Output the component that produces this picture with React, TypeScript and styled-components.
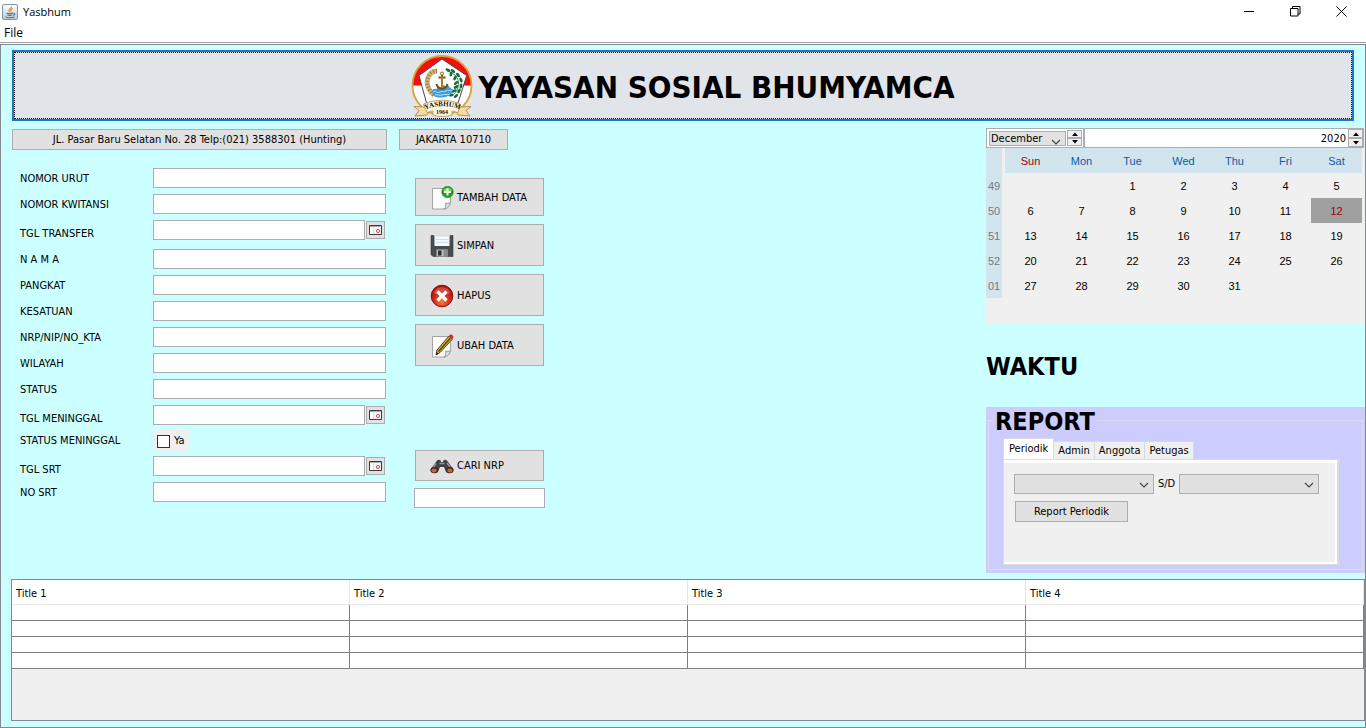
import React from "react";
import styled, { createGlobalStyle, css } from "styled-components";

const ui = `"DejaVu Sans Condensed", "DejaVu Sans", "Open Sans", sans-serif`;

const GlobalStyle = createGlobalStyle`
  *, *::before, *::after { box-sizing: border-box; }
  body { margin: 0; background: #fff; color: #000; font: 11px/14px ${ui}; }
  button, input, select { font: inherit; color: inherit; margin: 0; padding: 0; border-radius: 0; }
  svg { display: block; flex: none; }
`;

const Window = styled.div`
  display: flex;
  flex-direction: column;
  min-height: 100vh;
`;
const TitleBar = styled.header`
  display: flex;
  align-items: center;
  height: 23px;
  padding: 0 2px 0 2px;
  gap: 5px;
  font: 11px/16px "Open Sans", sans-serif;
`;
const WindowControls = styled.div`
  display: flex;
  margin-left: auto;
`;
const WindowButton = styled.button`
  display: grid;
  place-items: center;
  width: 46px;
  height: 21px;
  border: 0;
  background: transparent;
`;
const MenuBar = styled.nav`
  height: 20px;
  padding-left: 4px;
  border-bottom: 1px solid #a0a0a0;
  margin-bottom: 1px;
`;
const MenuItem = styled.button`
  border: 0;
  background: transparent;
  font: 12px/20px "Open Sans", sans-serif;
`;
const Panel = styled.main`
  flex: 1;
  display: flex;
  flex-direction: column;
  border: 1px solid #828790;
  background: #ccffff;
  padding: 5px 0 6px 10px;
`;
const Banner = styled.button`
  display: flex;
  flex: none;
  height: 71px;
  margin: 0 11px 0 1px;
  padding: 0;
  border: 2px solid #1a78c8;
  background: #e1e4e8;
`;
const BannerFocus = styled.span`
  flex: 1;
  align-self: stretch;
  display: flex;
  align-items: center;
  justify-content: center;
  gap: 4px;
  border: 1px dotted #000;
`;
const BannerTitle = styled.span`
  padding-top: 2px;
  font-size: 31px;
  line-height: 36px;
  font-weight: bold;
`;
const Content = styled.div`
  display: flex;
  justify-content: space-between;
  padding-top: 7px;
`;
const Entry = styled.section`
  padding: 1px 0 0 1px;
`;
const Row = styled.div`
  display: flex;
`;
const buttonFace = css`
  border: 1px solid #adadad;
  background: #e1e1e1;
`;
const InfoRow = styled.div`
  display: flex;
  gap: 12px;
`;
const InfoButton = styled.button<{ $width: number }>`
  ${buttonFace}
  width: ${(p) => p.$width}px;
  height: 21px;
`;
const Form = styled.form`
  padding: 18px 0 0 8px;
  width: 374px;
`;
const Field = styled.div<{ $tall?: boolean }>`
  display: flex;
  height: ${(p) => (p.$tall ? 29 : 26)}px;
`;
const CheckField = styled(Field)`
  margin-top: -4px;
`;
const FieldLabel = styled.label<{ $date?: boolean }>`
  width: 133px;
  line-height: ${(p) => (p.$date ? 28 : 22)}px;
`;
const TextBox = styled.input<{ $width?: number }>`
  width: ${(p) => p.$width ?? 233}px;
  height: 20px;
  padding: 0 3px;
  border: 1px solid #abadb3;
  background: #fff;
`;
const DateButton = styled.button`
  ${buttonFace}
  display: grid;
  place-items: center;
  width: 19px;
  height: 18px;
  margin: 1px 0 0 1px;
`;
const CheckLabel = styled.label`
  display: flex;
  align-items: center;
  gap: 4px;
  height: 22px;
  padding: 0 4px;
  background: #f0f0f0;
`;
const CheckBox = styled.input`
  appearance: none;
  width: 13px;
  height: 13px;
  border: 1px solid #333;
  background: #fff;
`;
const Actions = styled.div`
  display: flex;
  flex-direction: column;
  gap: 8px;
  padding: 28px 0 0 28px;
`;
const ActionButton = styled.button<{ $height: number }>`
  ${buttonFace}
  display: flex;
  align-items: center;
  gap: 3px;
  width: 129px;
  height: ${(p) => p.$height}px;
  margin: 0 1px;
  padding: 1px 0 0 14px;
`;
const Search = styled.div`
  display: flex;
  flex-direction: column;
  gap: 7px;
  padding-top: 76px;
`;
const Side = styled.aside`
  width: 379px;
`;
const Calendar = styled.section`
  height: 196px;
  background: #f0f0f0;
  padding-right: 1px;
`;
const CalendarBar = styled.div`
  display: flex;
  height: 20px;
  border: 1px solid #abadb3;
  background: #fff;
`;
const MonthBox = styled.div`
  display: flex;
  gap: 1px;
  padding: 1px 1px 1px 2px;
  border-right: 2px solid #abadb3;
`;
const YearBox = styled.div`
  display: flex;
  flex: 1;
`;
const YearInput = styled.input`
  flex: 1;
  min-width: 0;
  padding: 2px 2px 0 0;
  border: 0;
  background: #fff;
  text-align: right;
`;
const Spinner = styled.span`
  display: flex;
  flex-direction: column;
  width: 15px;
`;
const SpinButton = styled.button`
  ${buttonFace}
  flex: 1;
  min-height: 0;
  display: grid;
  place-items: center;
  background: #f0f0f0;
`;
const SelectWrap = styled.span<{ $width: number }>`
  position: relative;
  display: block;
  width: ${(p) => p.$width}px;
  svg { position: absolute; right: 5px; bottom: 5px; pointer-events: none; }
`;
const SelectBox = styled.select<{ $height: number }>`
  ${buttonFace}
  appearance: none;
  display: block;
  width: 100%;
  height: ${(p) => p.$height}px;
  padding-left: 1px;
  line-height: 12px;
`;
const MonthSelect = styled(SelectWrap)`
  padding-top: 1px;
  svg { bottom: 0; }
`;
const DayTable = styled.table`
  width: 376px;
  border-spacing: 0;
  table-layout: fixed;
  font: 11px/13px "Liberation Sans", sans-serif;
  text-align: center;
  td, th { height: 25px; padding: 2px 0 0; font-weight: normal; }
  thead th { background: #d2e4ee; color: #0a5ca8; }
  thead th:nth-child(2) { color: #a00000; }
  th:first-child { width: 19px; border-right: 3px solid #f0f0f0; background: #d2e4ee; color: #727a80; }
`;
const DayCell = styled.td<{ $today?: boolean }>`
  ${(p) => p.$today && css`background: #a0a0a0; color: #a00000;`}
`;
const Heading = styled.h2`
  margin: 0;
  font-size: 25px;
  line-height: 30px;
`;
const Clock = styled(Heading)`
  padding: 28px 0 25px;
`;
const Report = styled.section`
  height: 166px;
  padding: 0 2px 3px;
  background: #ccccff;
`;
const ReportGroup = styled.fieldset`
  height: 163px;
  min-width: 0;
  margin: 0;
  padding: 4px 23px 0 14px;
  border: 1px solid #dcdcee;
`;
const ReportLegend = styled.legend`
  margin-left: -10px;
  padding: 3px 2px 0;
  font-size: 25px;
  line-height: 24px;
  font-weight: bold;
`;
const Tabs = styled.div`
  display: flex;
  align-items: flex-end;
`;
const Tab = styled.button<{ $active?: boolean }>`
  height: ${(p) => (p.$active ? 21 : 18)}px;
  padding: 0 ${(p) => (p.$active ? 5 : 4)}px;
  border: solid #d9d9d9;
  border-width: 1px 1px 0 ${(p) => (p.$active ? 1 : 0)}px;
  background: ${(p) => (p.$active ? "#fff" : "#f0f0f0")};
  line-height: ${(p) => (p.$active ? 18 : 17)}px;
`;
const TabPage = styled.div`
  height: 106px;
  border: 1px solid #dcdcdc;
  border-width: 1px 2px 1px 1px;
  padding: 3px 2px 2px 0;
  background: #fff;
`;
const TabBody = styled.div`
  height: 100%;
  padding: 11px 0 0 10px;
  background: #f0f0f0;
`;
const Range = styled.div`
  display: flex;
  align-items: center;
  gap: 4px;
`;
const ReportButton = styled.button`
  ${buttonFace}
  width: 113px;
  height: 21px;
  margin: 7px 0 0 1px;
`;
const GridPane = styled.section`
  flex: 1;
  min-height: 142px;
  margin-top: 6px;
  border: 1px solid #828790;
  background: #f0f0f0;
`;
const DataTable = styled.table`
  width: 100%;
  border-spacing: 0;
  table-layout: fixed;
  background: #fff;
  th {
    height: 25px;
    padding: 3px 4px 0;
    border-right: 1px solid #e5e5e5;
    border-bottom: 1px solid #e8e8e8;
    font-weight: normal;
    text-align: left;
  }
  td {
    height: 16px;
    padding: 0;
    border-right: 1px solid #808080;
    border-bottom: 1px solid #808080;
  }
`;

const JavaIcon = () => (
  <svg width="16" height="16" viewBox="0 0 16 16">
    <defs>
      <linearGradient id="jv" x1="0" y1="0" x2="0" y2="1">
        <stop offset="0" stopColor="#fff" /><stop offset="1" stopColor="#b9cad6" />
      </linearGradient>
    </defs>
    <rect x=".5" y=".5" width="15" height="15" rx="1.5" fill="url(#jv)" stroke="#7896aa" />
    <path d="M9.6 2.5C10 4.4 6.5 5 6.9 6.6c.1.8.8 1.2 1 1.8M10.8 4.5C8.6 5.4 8.3 6.2 9 7c.4.6.2 1.1-.3 1.5" fill="none" stroke="#ee8b22" strokeWidth="1.1" />
    <path d="M4.6 9.3c2 .6 4.500.6 6.300 0M5.200 11c1.600.5 3.700.5 5.100 0M3.300 12.900c2.500.9 6.500.9 9.200 0M11.200 9.300c2.200-.4 2.100 1.700 0 2.200" fill="none" stroke="#4b7594" strokeWidth="1.1" />
  </svg>
);

const Logo = () => (
  <svg width="63" height="64" viewBox="0 0 63 64" role="img" aria-label="Yasbhum 1964">
    <circle cx="31" cy="31.500" r="29.500" fill="#fff" />
    <path d="M1.500 31.500a29.500 29.500 0 0 1 59 0z" fill="#f80d0d" />
    <circle cx="31" cy="31.500" r="29.500" fill="none" stroke="#d9a23a" strokeWidth="1.800" />
    <path d="M31 5 55.700 21.500 47 49H15.500L8 21.500z" fill="#fff" stroke="#49474d" strokeWidth="1" />
    <path d="M26 17C17 17 14 28 18 35c1.500 3 3 4.500 5 6" fill="none" stroke="#d3b47c" strokeWidth="5" />
    <path d="M26 17C17 17 14 28 18 35c1.500 3 3 4.500 5 6" fill="none" stroke="#9a7a44" strokeWidth="4" strokeDasharray="1 2" />
    <path d="M36 17c9 2 13 9 11 16-1 4-3 7-6 9" fill="none" stroke="#3a8a52" strokeWidth="1" />
    <g fill="#156b38">
      {[[37, 16, 20], [40, 20, 100], [42, 17, 40], [44, 24, 120], [47, 21, 50], [45, 29, 140], [50, 26, 70], [45, 33, 150], [50, 32, 100], [43, 37, 160], [48, 37, 120], [40, 41, 170], [45, 42, 140]].map(([x, y, a]) => (
        <ellipse key={`${x}-${y}`} cx={x} cy={y} rx="2.600" ry="1.400" transform={`rotate(${a} ${x} ${y})`} />
      ))}
    </g>
    <path d="M21 37c2-4 4 0 5-3s3 1 5-2 3 2 5 0 2 3 6 3c-1 2 0 3-2 5-3 4-15 5-18 1z" fill="#3b9be0" />
    <path d="M22 38c3-2 4 2 7 0s4 1 6-1 4 1 6-1M24 41c3-1 4 1 7 0s5 0 8-1" fill="none" stroke="#b7e0fa" strokeWidth="1" />
    <circle cx="31" cy="19.500" r="1.500" fill="none" stroke="#8a5c12" strokeWidth="1" />
    <path d="M31 21v14M27.500 23.500h7M25.500 30c.5 3 3 4.500 5.500 5 2.500-.5 5-2 5.500-5" fill="none" stroke="#7a4d0c" strokeWidth="2" />
    <path d="M31 22v12" stroke="#e0ad3c" strokeWidth="1" />
    <path d="M14 53 3 52.500l5 4-4 5.500 12-1 2-4M49 53l11-.5-5 4 4 5.500-12-1-2-4" fill="#f5dda0" stroke="#a87a3c" strokeWidth=".800" />
    <path d="M12.500 50c12-5 25-5 37 0l-2.500 8.500c-2 0-4-1.500-6-1.500v4c-5 2-14 2-19 0v-4c-3 0-4 1.500-6 1.500z" fill="#fff6dc" stroke="#b98a48" strokeWidth=".800" />
    <path id="ribbon" d="M14.500 55.500c11-4.500 23-4.500 34 0" fill="none" />
    <text fontFamily="Liberation Serif, serif" fontWeight="bold" fontSize="7" fill="#111">
      <textPath href="#ribbon" startOffset="50%" textAnchor="middle">YASBHUM</textPath>
    </text>
    <text x="31" y="60" textAnchor="middle" fontFamily="Liberation Serif, serif" fontWeight="bold" fontSize="6" fill="#111">1964</text>
  </svg>
);

const Page = () => (
  <>
    <path d="M2.500 2.500h18v14l-5.500 6.500H2.500z" fill="#fcfcfc" stroke="#9c9c9c" strokeWidth=".900" />
    <path d="M20.500 16.500c-2 1.500-4 .5-5 .5.500 2 .5 4-1.500 6 3 0 6-3 6.500-6.500z" fill="#ddd" stroke="#8c8c8c" strokeWidth=".800" />
  </>
);
const AddIcon = () => (
  <svg width="24" height="24" viewBox="0 0 24 24">
    <Page />
    <circle cx="17.500" cy="6" r="5.800" fill="#1fa01f" stroke="#0d7d12" strokeWidth=".500" />
    <path d="M13 4.500a5 5 0 0 1 9 0c-3 1.500-6 1.500-9 0z" fill="#78d46c" />
    <path d="M17.500 2.500v7M14 6h7" stroke="#fff" strokeWidth="2" />
  </svg>
);
const SaveIcon = () => (
  <svg width="24" height="24" viewBox="0 0 24 24">
    <path d="M1 1.500h22v21H3L1 20.500z" fill="#4a4b4f" stroke="#37383c" strokeWidth=".600" />
    <path d="M4.500 1h15v11h-15z" fill="#f5f9fd" />
    <path d="M4.500 1h15v1.500h-15zM4.500 5h15v1h-15zM4.500 8h15v1h-15z" fill="#cfe0f0" />
    <path d="M6.500 15.500h11v7h-11z" fill="#bcbdc0" />
    <path d="M8 16.500h3.500v5H8z" fill="#2e2f33" />
    <path d="M13.500 15.500h4v7h-4z" fill="#8b8c90" />
  </svg>
);
const DeleteIcon = () => (
  <svg width="24" height="24" viewBox="0 0 24 24">
    <defs>
      <radialGradient id="dl" cx=".5" cy=".75" r=".65">
        <stop offset="0" stopColor="#f0803c" /><stop offset=".6" stopColor="#cf2a18" /><stop offset="1" stopColor="#a80d10" />
      </radialGradient>
    </defs>
    <circle cx="12" cy="12" r="10.800" fill="url(#dl)" stroke="#8e1113" />
    <path d="M3.500 9a9 9 0 0 1 17 0c-5 3-12 3-17 0z" fill="#e66a5a" opacity=".6" />
    <path d="m7.500 7.500 9 9M16.500 7.500l-9 9" stroke="#fff" strokeWidth="3.200" />
  </svg>
);
const EditIcon = () => (
  <svg width="24" height="24" viewBox="0 0 24 24">
    <Page />
    <path d="m6 21 1-5L19 2l3.500 3L10 18.500z" fill="#e4b53a" stroke="#4b3a10" strokeWidth="1" />
    <path d="M8.500 17.500 20.500 4" stroke="#5a4712" strokeWidth="1.600" />
    <path d="m18.500 2.500 1.500-1.700c1.500-.8 4 1 3.200 2.700L22 5z" fill="#c9302a" />
    <path d="m6 21 .7-3 1.900 1.600z" fill="#222" />
  </svg>
);
const BinocularsIcon = () => (
  <svg width="24" height="24" viewBox="0 0 24 24">
    <path d="M7 6.500c2-1.500 4-.5 4 1.500h2c0-2 2-3 4-1.500l6.500 9c.5 4-5 5-7.500 2.500L14 13h-4l-2 5C5.500 20.500 0 19.500.5 15.500z" fill="#424246" />
    <path d="M6 9.500 3.500 13M17 9l3 4M9.500 9.500h5" stroke="#96969a" strokeWidth="1.500" />
    <ellipse cx="4.300" cy="16" rx="3.800" ry="3" fill="#3b2a22" />
    <ellipse cx="19.700" cy="16" rx="3.800" ry="3" fill="#3b2a22" />
    <ellipse cx="4" cy="16.500" rx="2.600" ry="2" fill="#d2622a" />
    <ellipse cx="19.900" cy="16.500" rx="2.600" ry="2" fill="#d2622a" />
  </svg>
);
const DateIcon = () => (
  <svg width="14" height="12" viewBox="0 0 14 12">
    <path d="M.5 1.500h12v9H.5z" fill="#f4f4f4" stroke="#333a44" />
    <path d="M1 2h11v1H1z" fill="#9db4cc" />
    <path d="M1 2h4v1H1z" fill="#c8a878" />
    <path d="M1 3.500h3v6.500H1z" fill="#fff" />
    <path d="M4.500 3.500v6.500" stroke="#ddd" />
    <circle cx="9" cy="7" r="1.600" fill="none" stroke="#e04848" />
  </svg>
);
const Chevron = () => (
  <svg width="10" height="7" viewBox="0 0 10 7"><path d="m1 1 4 4 4-4" fill="none" stroke="#444" strokeWidth="1.200" /></svg>
);
const Arrow = ({ down }: { down?: boolean }) => (
  <svg width="6" height="4" viewBox="0 0 6 4"><path d={down ? "M0 0h6L3 3.500z" : "M0 4h6L3 .500z"} /></svg>
);
const Spin = ({ name }: { name: string }) => (
  <Spinner>
    <SpinButton type="button" aria-label={`Next ${name}`}><Arrow /></SpinButton>
    <SpinButton type="button" aria-label={`Previous ${name}`}><Arrow down /></SpinButton>
  </Spinner>
);

type FieldKind = "text" | "date" | "check";
const fields: { label: string; kind: FieldKind; tall?: boolean }[] = [
  { label: "NOMOR URUT", kind: "text" },
  { label: "NOMOR KWITANSI", kind: "text" },
  { label: "TGL TRANSFER", kind: "date", tall: true },
  { label: "N A M A", kind: "text" },
  { label: "PANGKAT", kind: "text" },
  { label: "KESATUAN", kind: "text" },
  { label: "NRP/NIP/NO_KTA", kind: "text" },
  { label: "WILAYAH", kind: "text" },
  { label: "STATUS", kind: "text" },
  { label: "TGL MENINGGAL", kind: "date", tall: true },
  { label: "STATUS MENINGGAL", kind: "check" },
  { label: "TGL SRT", kind: "date" },
  { label: "NO SRT", kind: "text" },
];

const FormField = ({ label, kind, tall, id }: { label: string; kind: FieldKind; tall?: boolean; id: string }) => {
  if (kind === "check")
    return (
      <CheckField>
        <FieldLabel htmlFor={id}>{label}</FieldLabel>
        <CheckLabel><CheckBox type="checkbox" id={id} />Ya</CheckLabel>
      </CheckField>
    );
  const date = kind === "date";
  return (
    <Field $tall={tall}>
      <FieldLabel htmlFor={id} $date={date}>{label}</FieldLabel>
      <TextBox id={id} $width={date ? 212 : 233} />
      {date && <DateButton type="button" aria-label={`Pilih ${label}`}><DateIcon /></DateButton>}
    </Field>
  );
};

const actions = [
  { label: "TAMBAH DATA", height: 38, Icon: AddIcon },
  { label: "SIMPAN", height: 42, Icon: SaveIcon },
  { label: "HAPUS", height: 42, Icon: DeleteIcon },
  { label: "UBAH DATA", height: 42, Icon: EditIcon },
];
const days = ["Sun", "Mon", "Tue", "Wed", "Thu", "Fri", "Sat"];
const weeks = ["49", "50", "51", "52", "01"];
const titles = ["Title 1", "Title 2", "Title 3", "Title 4"];

export default function App() {
  return (
    <Window>
      <GlobalStyle />
      <TitleBar>
        <JavaIcon />
        <span>Yasbhum</span>
        <WindowControls>
          <WindowButton aria-label="Minimize"><svg width="10" height="11"><path d="M0 5.500h10" stroke="#000" /></svg></WindowButton>
          <WindowButton aria-label="Restore"><svg width="11" height="11"><path d="M.5 2.500h7.500v7.500H.5zM2.500 2.500V.5h7.500v7.500H8" fill="none" stroke="#000" /></svg></WindowButton>
          <WindowButton aria-label="Close"><svg width="11" height="11"><path d="m.5.5 10 10m0-10-10 10" stroke="#000" /></svg></WindowButton>
        </WindowControls>
      </TitleBar>
      <MenuBar><MenuItem>File</MenuItem></MenuBar>
      <Panel>
        <Banner>
          <BannerFocus><Logo /><BannerTitle>YAYASAN SOSIAL BHUMYAMCA</BannerTitle></BannerFocus>
        </Banner>
        <Content>
          <Entry>
            <InfoRow>
              <InfoButton $width={375}>JL. Pasar Baru Selatan No. 28 Telp:(021) 3588301 (Hunting)</InfoButton>
              <InfoButton $width={109}>JAKARTA 10710</InfoButton>
            </InfoRow>
            <Row>
              <Form>
                {fields.map((f, i) => <FormField key={f.label} id={`f${i}`} {...f} />)}
              </Form>
              <Actions>
                {actions.map(({ label, height, Icon }) => (
                  <ActionButton key={label} type="button" $height={height}><Icon />{label}</ActionButton>
                ))}
                <Search>
                  <ActionButton type="button" $height={31}><BinocularsIcon />CARI NRP</ActionButton>
                  <TextBox aria-label="NRP" $width={131} />
                </Search>
              </Actions>
            </Row>
          </Entry>
          <Side>
            <Calendar>
              <CalendarBar>
                <MonthBox>
                  <MonthSelect $width={77}>
                    <SelectBox $height={15} aria-label="Bulan"><option>December</option></SelectBox>
                    <Chevron />
                  </MonthSelect>
                  <Spin name="month" />
                </MonthBox>
                <YearBox>
                  <YearInput aria-label="Tahun" defaultValue="2020" />
                  <Spin name="year" />
                </YearBox>
              </CalendarBar>
              <DayTable>
                <thead>
                  <tr><th />{days.map((d) => <th key={d} scope="col">{d}</th>)}</tr>
                </thead>
                <tbody>
                  {weeks.map((week, w) => (
                    <tr key={week}>
                      <th scope="row">{week}</th>
                      {days.map((d, i) => {
                        const date = w * 7 + i - 1;
                        return <DayCell key={d} $today={date === 12}>{date > 0 && date < 32 ? date : ""}</DayCell>;
                      })}
                    </tr>
                  ))}
                </tbody>
              </DayTable>
            </Calendar>
            <Clock>WAKTU</Clock>
            <Report>
              <ReportGroup>
                <ReportLegend>REPORT</ReportLegend>
                <Tabs role="tablist">
                  {["Periodik", "Admin", "Anggota", "Petugas"].map((t, i) => (
                    <Tab key={t} type="button" role="tab" aria-selected={i === 0} $active={i === 0}>{t}</Tab>
                  ))}
                </Tabs>
                <TabPage role="tabpanel">
                  <TabBody>
                    <Range>
                      <SelectWrap $width={140}><SelectBox $height={20} aria-label="Dari" /><Chevron /></SelectWrap>
                      S/D
                      <SelectWrap $width={140}><SelectBox $height={20} aria-label="Sampai" /><Chevron /></SelectWrap>
                    </Range>
                    <ReportButton type="button">Report Periodik</ReportButton>
                  </TabBody>
                </TabPage>
              </ReportGroup>
            </Report>
          </Side>
        </Content>
        <GridPane>
          <DataTable>
            <thead><tr>{titles.map((t) => <th key={t} scope="col">{t}</th>)}</tr></thead>
            <tbody>
              {[1, 2, 3, 4].map((r) => <tr key={r}>{titles.map((t) => <td key={t} />)}</tr>)}
            </tbody>
          </DataTable>
        </GridPane>
      </Panel>
    </Window>
  );
}
